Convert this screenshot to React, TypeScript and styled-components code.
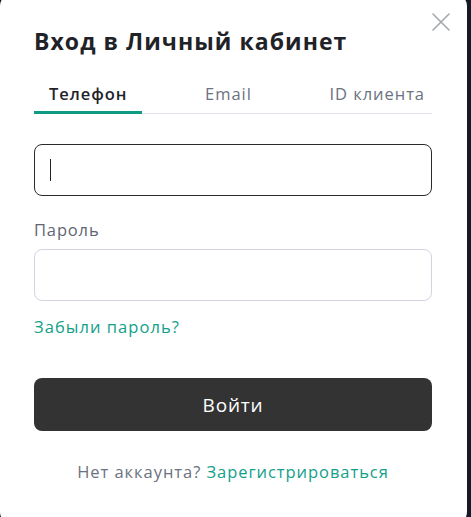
import { useState } from 'react';
import styled, { createGlobalStyle } from 'styled-components';

const GlobalStyle = createGlobalStyle`
  html, body {
    margin: 0;
    padding: 0;
    background: #141a26;
    overflow: hidden;
  }
  * { box-sizing: border-box; }
`;

const Modal = styled.div`
  position: relative;
  width: 467px;
  height: 530px;
  margin-top: -6px;
  padding: 33px 35px 0 34px;
  background: #ffffff;
  border-radius: 12px;
  font-family: 'Open Sans', 'Noto Sans', sans-serif;
  color: #1f2328;
`;

const CloseButton = styled.button`
  position: absolute;
  top: 17px;
  right: 15px;
  width: 22px;
  height: 22px;
  padding: 0;
  border: none;
  background: none;
  color: #a3a7ae;
  cursor: pointer;
  display: flex;
  align-items: center;
  justify-content: center;
`;

const Title = styled.h2`
  margin: 0;
  font-size: 23px;
  line-height: 28px;
  font-weight: 700;
  letter-spacing: 1.05px;
`;

const TabList = styled.div`
  display: flex;
  justify-content: space-between;
  margin-top: 23px;
  box-shadow: inset 0 -1px 0 #e2e6ec;
`;

const Tab = styled.button<{ $active?: boolean }>`
  padding: 6px 15px 7px;
  border: none;
  border-bottom: 3px solid ${p => (p.$active ? '#0f9b83' : 'transparent')};
  background: none;
  font-family: inherit;
  font-size: 16.5px;
  line-height: 20px;
  letter-spacing: 0.95px;
  font-weight: ${p => (p.$active ? 600 : 500)};
  color: ${p => (p.$active ? '#1f2328' : '#6b7280')};
  cursor: pointer;

  &:last-child {
    padding-right: 7px;
  }
`;

const Field = styled.div<{ $top: number }>`
  display: flex;
  flex-direction: column;
  margin-top: ${p => p.$top}px;
`;

const Label = styled.label`
  font-size: 16.5px;
  line-height: 20px;
  letter-spacing: 0.85px;
  color: #5f6673;
  margin-bottom: 9px;
`;

const Input = styled.input<{ $focused?: boolean }>`
  width: 100%;
  height: 52px;
  padding: 0 16px;
  border: 1px solid ${p => (p.$focused ? '#2a2a2a' : '#d4d4e0')};
  border-radius: 8px;
  font-family: inherit;
  font-size: 16px;
  color: #1f2328;
  outline: none;
  caret-color: #1f2328;
`;

const Caret = styled.span`
  position: absolute;
  left: 16px;
  top: 15px;
  width: 1px;
  height: 22px;
  background: #1f2328;
`;

const InputWrap = styled.div`
  position: relative;
`;

const LinkText = styled.a`
  color: #12a089;
  text-decoration: none;
  cursor: pointer;
`;

const Forgot = styled(LinkText)`
  display: block;
  margin-top: 16px;
  font-size: 16.5px;
  line-height: 20px;
  letter-spacing: 1.05px;
`;

const SubmitButton = styled.button`
  width: 100%;
  height: 53px;
  margin-top: 41px;
  border: none;
  border-radius: 8px;
  background: #333333;
  color: #ffffff;
  font-family: inherit;
  font-size: 19px;
  font-weight: 500;
  letter-spacing: 0.8px;
  cursor: pointer;
`;

const Footer = styled.p`
  margin: 31px 0 0;
  text-align: center;
  font-size: 16.5px;
  line-height: 20px;
  letter-spacing: 0.95px;
  color: #6b7280;
`;

const tabs = ['Телефон', 'Email', 'ID клиента'];

export default function App() {
  const [active, setActive] = useState(0);

  return (
    <>
      <GlobalStyle />
      <Modal>
        <CloseButton aria-label="Закрыть">
          <svg width="18" height="18" viewBox="0 0 18 18" fill="none" stroke="currentColor" strokeWidth="1.6" strokeLinecap="round">
            <path d="M1 1l16 16M17 1L1 17" />
          </svg>
        </CloseButton>

        <Title>Вход в Личный кабинет</Title>

        <TabList>
          {tabs.map((t, i) => (
            <Tab key={t} $active={i === active} onClick={() => setActive(i)}>
              {t}
            </Tab>
          ))}
        </TabList>

        <Field $top={30}>
          <InputWrap>
            <Input $focused type="tel" />
            <Caret />
          </InputWrap>
        </Field>

        <Field $top={24}>
          <Label>Пароль</Label>
          <Input type="password" />
        </Field>

        <Forgot>Забыли пароль?</Forgot>

        <SubmitButton>Войти</SubmitButton>

        <Footer>
          Нет аккаунта? <LinkText>Зарегистрироваться</LinkText>
        </Footer>
      </Modal>
    </>
  );
}
